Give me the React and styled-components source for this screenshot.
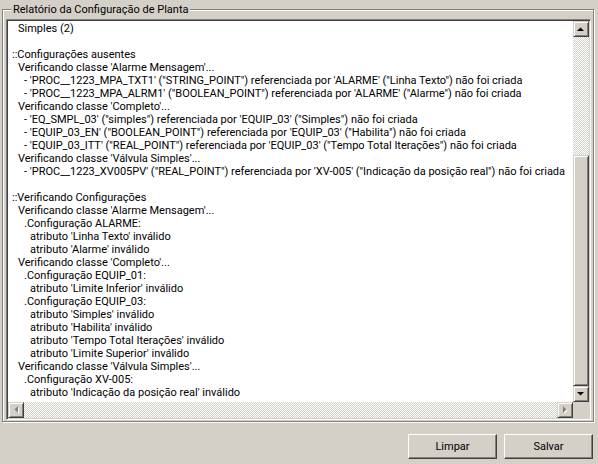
import React from 'react';
import styled, { createGlobalStyle } from 'styled-components';

const GlobalStyle = createGlobalStyle`
  html, body {
    margin: 0;
    padding: 0;
    background: #d4d0c8;
  }
  body {
    font-family: Roboto, "Liberation Sans", Arial, sans-serif;
    font-size: 11px;
    color: #000;
  }
`;

const Window = styled.div`
  width: 598px;
  height: 464px;
  display: flex;
  flex-direction: column;
  background: #d4d0c8;
  overflow: hidden;
`;

const GroupBox = styled.div`
  flex: 1;
  display: flex;
  flex-direction: column;
  margin: 9px 4px 0 2px;
  padding: 0 2px 1px 3px;
  border: 1px solid #808080;
  box-shadow: inset 1px 1px 0 #fff, 1px 1px 0 #fff;
  min-height: 0;
`;

const Legend = styled.div`
  align-self: flex-start;
  margin: -7px 0 0 5px;
  padding: 0 2px;
  height: 13px;
  line-height: 13px;
  background: #d4d0c8;
  white-space: nowrap;
`;

const TextBox = styled.div`
  flex: 1;
  margin-top: 3px;
  display: grid;
  grid-template-columns: 1fr 16px;
  grid-template-rows: 1fr 16px;
  border: 1px solid;
  border-color: #808080 #fff #fff #808080;
  box-shadow: inset 1px 1px 0 #404040, inset -1px -1px 0 #d4d0c8;
  padding: 1px;
  background: #fff;
  min-height: 0;
`;

const Viewport = styled.div`
  overflow: hidden;
  padding: 1px 0 0 4px;
  background: #fff;
`;

const Line = styled.div`
  height: 13px;
  line-height: 13px;
  white-space: pre;
  padding-left: ${p => p.$level * 6}px;
`;

const VScroll = styled.div`
  display: flex;
  flex-direction: column;
`;

const HScroll = styled.div`
  display: flex;
`;

const Track = styled.div`
  flex: 1;
  display: flex;
  flex-direction: ${p => (p.$vertical ? 'column' : 'row')};
  justify-content: flex-end;
  background: repeating-conic-gradient(#d4d0c8 0 25%, #fff 0 50%) 0 0 / 2px 2px;
`;

const raised = `
  box-sizing: border-box;
  background: #d4d0c8;
  border: 1px solid;
  border-color: #d4d0c8 #404040 #404040 #d4d0c8;
  box-shadow: inset 1px 1px 0 #fff, inset -1px -1px 0 #808080;
`;

const Thumb = styled.div`
  ${raised}
  height: ${p => p.$size}px;
`;

const ArrowButton = styled.div`
  ${raised}
  width: 16px;
  height: 16px;
  flex: none;
  display: flex;
  align-items: center;
  justify-content: center;
`;

const Corner = styled.div`
  background: #d4d0c8;
`;

const ButtonRow = styled.div`
  display: flex;
  justify-content: flex-end;
  gap: 7px;
  margin: 12px 5px 5px 0;
`;

const Button = styled.button`
  width: 89px;
  height: 25px;
  padding: 0;
  font-family: Roboto, "Liberation Sans", Arial, sans-serif;
  font-size: 11px;
  color: #000;
  background: #d4d0c8;
  border: 1px solid;
  border-color: #fff #404040 #404040 #fff;
  box-shadow: inset -1px -1px 0 #808080;
  outline: none;
`;

const Arrow = ({ dir, disabled }) => {
  const shapes = {
    up: '0,4 7,4 3.5,0.5',
    down: '0,0 7,0 3.5,3.5',
    left: '4,0 4,7 0.5,3.5',
    right: '0,0 0,7 3.5,3.5',
  };
  const horizontal = dir === 'left' || dir === 'right';
  const w = horizontal ? 5 : 8;
  const h = horizontal ? 8 : 5;
  return (
    <svg width={w} height={h} viewBox={`0 0 ${w} ${h}`}>
      {disabled && (
        <polygon points={shapes[dir]} fill="#fff" transform="translate(1,1)" />
      )}
      <polygon points={shapes[dir]} fill={disabled ? '#808080' : '#000'} />
    </svg>
  );
};

const lines = [
  [1, 'Simples (2)'],
  [0, ''],
  [0, '::Configurações ausentes'],
  [1, "Verificando classe 'Alarme Mensagem'..."],
  [2, `- 'PROC__1223_MPA_TXT1' ("STRING_POINT") referenciada por 'ALARME' ("Linha Texto") não foi criada`],
  [2, `- 'PROC__1223_MPA_ALRM1' ("BOOLEAN_POINT") referenciada por 'ALARME' ("Alarme") não foi criada`],
  [1, "Verificando classe 'Completo'..."],
  [2, `- 'EQ_SMPL_03' ("simples") referenciada por 'EQUIP_03' ("Simples") não foi criada`],
  [2, `- 'EQUIP_03_EN' ("BOOLEAN_POINT") referenciada por 'EQUIP_03' ("Habilita") não foi criada`],
  [2, `- 'EQUIP_03_ITT' ("REAL_POINT") referenciada por 'EQUIP_03' ("Tempo Total Iterações") não foi criada`],
  [1, "Verificando classe 'Válvula Simples'..."],
  [2, `- 'PROC__1223_XV005PV' ("REAL_POINT") referenciada por 'XV-005' ("Indicação da posição real") não foi criada`],
  [0, ''],
  [0, '::Verificando Configurações'],
  [1, "Verificando classe 'Alarme Mensagem'..."],
  [2, '.Configuração ALARME:'],
  [3, "atributo 'Linha Texto' inválido"],
  [3, "atributo 'Alarme' inválido"],
  [1, "Verificando classe 'Completo'..."],
  [2, '.Configuração EQUIP_01:'],
  [3, "atributo 'Limite Inferior' inválido"],
  [2, '.Configuração EQUIP_03:'],
  [3, "atributo 'Simples' inválido"],
  [3, "atributo 'Habilita' inválido"],
  [3, "atributo 'Tempo Total Iterações' inválido"],
  [3, "atributo 'Limite Superior' inválido"],
  [1, "Verificando classe 'Válvula Simples'..."],
  [2, '.Configuração XV-005:'],
  [3, "atributo 'Indicação da posição real' inválido"],
];

export default function App() {
  return (
    <>
      <GlobalStyle />
      <Window>
        <GroupBox>
          <Legend>Relatório da Configuração de Planta</Legend>
          <TextBox>
            <Viewport>
              {lines.map(([level, text], i) => (
                <Line key={i} $level={level}>{text}</Line>
              ))}
            </Viewport>
            <VScroll>
              <ArrowButton><Arrow dir="up" /></ArrowButton>
              <Track $vertical>
                <Thumb $size={231} />
              </Track>
              <ArrowButton><Arrow dir="down" /></ArrowButton>
            </VScroll>
            <HScroll>
              <ArrowButton><Arrow dir="left" disabled /></ArrowButton>
              <Track />
              <ArrowButton><Arrow dir="right" disabled /></ArrowButton>
            </HScroll>
            <Corner />
          </TextBox>
        </GroupBox>
        <ButtonRow>
          <Button>Limpar</Button>
          <Button>Salvar</Button>
        </ButtonRow>
      </Window>
    </>
  );
}
